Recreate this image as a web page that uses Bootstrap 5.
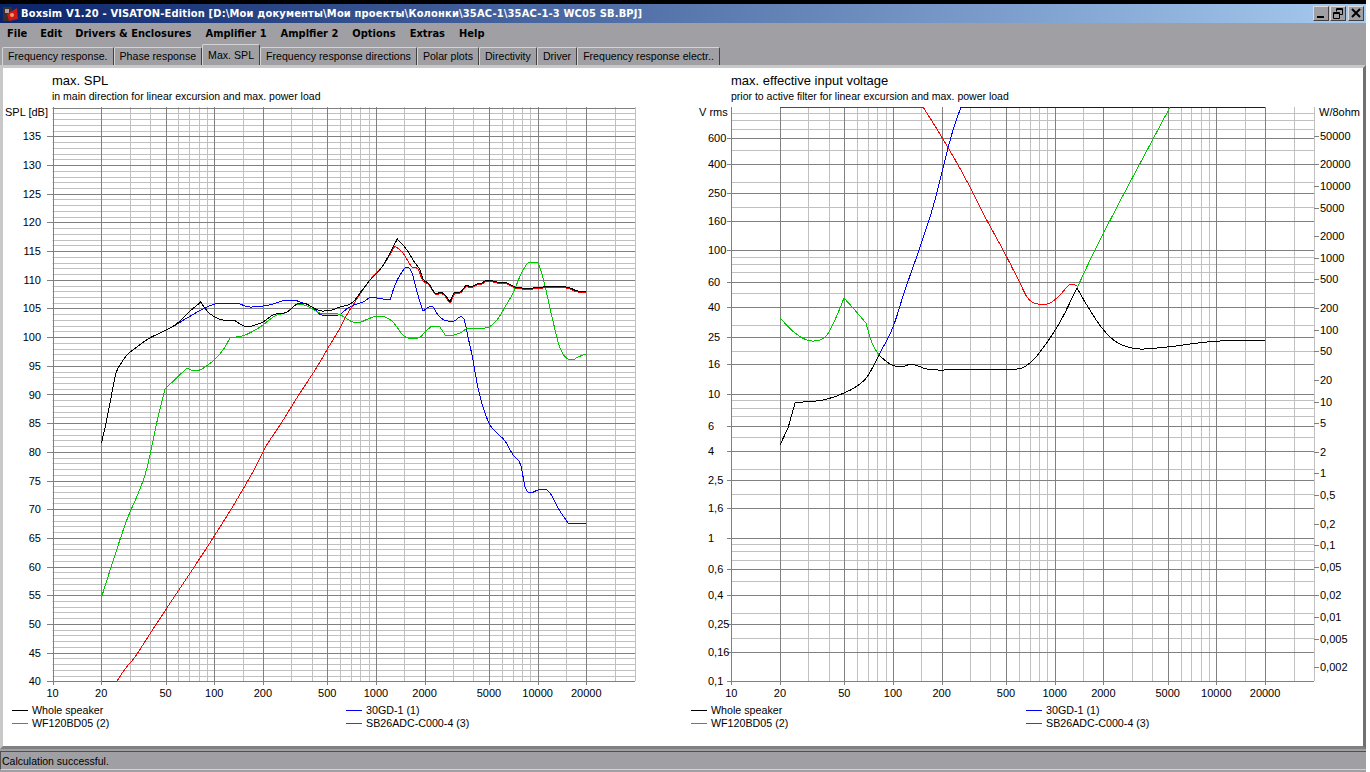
<!DOCTYPE html>
<html lang="en">
<head>
    <meta charset="UTF-8">
    <title>Boxsim V1.20</title>
    <link href="https://cdn.jsdelivr.net/npm/bootstrap@5.3.0/dist/css/bootstrap.min.css" rel="stylesheet">
    <style>
        body {
            background: #fff;
            overflow: hidden;
            font-family: "Liberation Sans", Arial, sans-serif;
            color: #000;
        }

        .app-window {
            width: 1366px;
            height: 772px;
            background: #a0a0a4;
            border-top: 4px solid #000;
        }

        .title-bar {
            height: 19px;
            padding: 0 2px 0 3px;
            background: linear-gradient(to right, #0a246a, #a6caf0);
        }

        .title-text {
            margin-left: 3px;
            color: #fff;
            font: bold 11px "DejaVu Sans Condensed", "Liberation Sans", sans-serif;
            letter-spacing: .17px;
            white-space: nowrap;
        }

        .win-btn {
            width: 16px;
            height: 15px;
            margin-left: 1px;
            background: #a0a0a4;
            border: 1px solid;
            border-color: #dcdcdc #404040 #404040 #dcdcdc;
        }

        .win-btn:last-child {
            margin-left: 2px;
        }

        .menu-bar {
            height: 21px;
            padding-left: 7px;
            font: bold 11px "DejaVu Sans Condensed", "Liberation Sans", sans-serif;
        }

        .menu-bar span {
            margin-right: 14px;
        }

        .menu-bar span:nth-child(-n+2) {
            margin-right: 13px;
        }

        .tab-row {
            height: 21px;
            padding-left: 2px;
            border: 0;
            flex-wrap: nowrap;
        }

        .tab-row .nav-link {
            height: 18px;
            margin-top: 3px;
            padding: 0 5px;
            color: #000;
            background: #a0a0a4;
            font-size: 10.6px;
            line-height: 16px;
            white-space: nowrap;
            border: 1px solid;
            border-color: #d4d4d4 #404040 #a0a0a4 #d4d4d4;
            border-bottom: 0;
            border-radius: 2px 2px 0 0;
        }

        .tab-row .nav-link.active {
            height: 21px;
            margin-top: 0;
            line-height: 20px;
            color: #000;
            background: #a0a0a4;
            border-color: #d4d4d4 #404040 #a0a0a4 #d4d4d4;
        }

        .chart-panel {
            height: 684px;
            background: #fff;
            border: 3px solid;
            border-color: #c8c8c8 #707070 #808080 #c8c8c8;
        }

        .chart-panel svg {
            display: block;
            font-family: "Liberation Sans", Arial, sans-serif;
            font-size: 11px;
        }

        .chart-panel polyline {
            shape-rendering: crispEdges;
        }

        .status-bar {
            height: 19px;
            margin-top: 2px;
            padding-left: 1px;
            font-size: 10.5px;
            line-height: 18px;
            border-top: 1px solid #505050;
            border-left: 1px solid #505050;
            border-bottom: 1px solid #d4d4d4;
        }
    </style>
</head>
<body>
    <div class="app-window d-flex flex-column">
        <div class="title-bar d-flex align-items-center">
            <svg width="15" height="16" viewBox="0 0 15 16">
                <rect x="0" y="1" width="9" height="14" fill="#3a3030"/>
                <rect x="2" y="3" width="4" height="4" fill="#b0a0a0"/>
                <polygon points="4,8 14,2 15,13 6,15" fill="#d01818"/>
                <circle cx="9" cy="9" r="2" fill="#f0a060"/>
            </svg>
            <div class="title-text flex-grow-1">Boxsim V1.20 - VISATON-Edition [D:\Мои документы\Мои проекты\Колонки\35AC-1\35AC-1-3 WC05 SB.BPJ]</div>
            <div class="d-flex">
                <div class="win-btn">
                    <svg class="d-block" width="14" height="13" viewBox="0 0 14 13"><rect x="3" y="9" width="7" height="2" fill="#000"/></svg>
                </div>
                <div class="win-btn">
                    <svg class="d-block" width="14" height="13" viewBox="0 0 14 13" fill="none" stroke="#000"><path d="M5.5 4.5V1.5H11.5V7.5H9M5 2.5H11"/><path d="M2.5 5.5H8.5V11.5H2.5ZM2 6.5H9"/></svg>
                </div>
                <div class="win-btn">
                    <svg class="d-block" width="14" height="13" viewBox="0 0 14 13" fill="none" stroke="#000" stroke-width="2"><path d="M3 2L11 10M11 2L3 10"/></svg>
                </div>
            </div>
        </div>

        <div class="menu-bar d-flex align-items-center">
            <span>File</span><span>Edit</span><span>Drivers &amp; Enclosures</span><span>Amplifier 1</span><span>Amplfier 2</span><span>Options</span><span>Extras</span><span>Help</span>
        </div>

        <ul class="nav tab-row">
            <li class="nav-item"><a class="nav-link" href="#">Frequency response.</a></li>
            <li class="nav-item"><a class="nav-link" href="#">Phase response</a></li>
            <li class="nav-item"><a class="nav-link active" href="#">Max. SPL</a></li>
            <li class="nav-item"><a class="nav-link" href="#">Frequency response directions</a></li>
            <li class="nav-item"><a class="nav-link" href="#">Polar plots</a></li>
            <li class="nav-item"><a class="nav-link" href="#">Directivity</a></li>
            <li class="nav-item"><a class="nav-link" href="#">Driver</a></li>
            <li class="nav-item"><a class="nav-link" href="#">Frequency response electr..</a></li>
        </ul>

        <div class="chart-panel d-flex">
            <svg id="chart-spl" width="660" height="678" viewBox="3 68 660 678"></svg>
            <svg id="chart-volt" width="700" height="678" viewBox="663 68 700 678"></svg>
        </div>

        <div class="status-bar">Calculation successful.</div>
    </div>

    <script>
        const DARK = '#808080', LIGHT = '#c0c0c0';
        const BLUE = '#0000ff', GREEN = '#00c800', RED = '#ff0000', BLACK = '#000000';
        const X_MAJOR = [10, 20, 50, 100, 200, 500, 1000, 2000, 5000, 10000, 20000];
        const X_MINOR = [30, 40, 60, 70, 80, 90, 150, 300, 400, 600, 700, 800, 900, 1500, 3000, 4000, 6000, 7000, 8000, 9000, 15000, 30000, 40000];

        // curves are pixel traces of the reference, in page coordinates; a third value 1 marks a sharp corner
        const splBlack = [[101.5,443,1],[106.7,420],[110,403],[113.3,385],[116,373],[120,365],[128,354],[137,347],[148,339],[160,333],[172,327],[180,321],[188,313],[200.7,302,1],[208,312],[215,317],[223,320],[233,320],[240,324],[248,327],[255,325],[263,322],[273,315],[287,312],[297,304],[303,303],[312,307],[322,311],[332,310],[340,307],[348,305],[353,302],[360,293],[370,280],[382,267],[397.3,239,1],[407,250],[415,263],[420,270],[423,279],[428,283],[437,294],[440,292],[445,295],[450,302,1],[455,292],[460,292],[467,285],[470,287],[477,284],[482,283],[487,280],[497,282],[507,283],[515,287],[522,288],[533,288],[543,287],[560,286],[570,288],[578,291],[586,291]];
        const splRedLow = [[101.5,681,1],[117,681,1],[125,669],[135,657],[146,640],[254,470],[265,448],[280,425],[300,393],[317,367],[328,348],[340,328],[345,318],[353,305],[370,280],[382,267],[395,246,1],[403,253],[412,267],[418,269],[423,281],[428,284]];
        const splRed = splRedLow.concat(splBlack.filter(p => p[0] > 428).map(p => [p[0], p[1] + 1]));
        const splBlue = splBlack.filter(p => p[0] < 172).concat([[172,327],[187,318],[203,309],[212,305],[220,303],[235,303],[250,307],[263,306],[273,304],[282,301],[292,300],[303,303],[312,307],[322,315],[338,315],[348,308],[357,304],[363,302],[372,297],[377,298],[390,300,1],[395,285],[402,272],[407,267],[412,273],[417,292],[423,311,1],[432,306],[438,315],[448,321],[454,321],[460,317],[464,319],[468,337],[473,360],[477,383],[483,407],[490,425],[498,434],[505,441],[513,455],[521,466],[525,487],[530,493],[538,490],[545,489],[550,493],[558,508],[568,523,1],[586,523,1]]);
        const splGreen = [[101.5,597,1],[125,525],[147,468],[151,450],[158,417],[165,389,1],[187,368,1],[195,371],[205,367],[223,350],[230,338,1],[245,335],[260,327],[275,316],[287,312],[298,304],[307,306],[320,313],[338,314],[357,323],[368,319],[377,316],[385,317],[393,322],[403,335],[408,338],[418,338],[427,330],[433,326],[438,326],[447,336],[462,332],[468,328],[485,328],[497,320],[505,307],[513,293],[523,270],[530,262],[537,262],[543,278],[552,317],[560,348],[572,360],[578,357],[586,354]];

        const voltBlack = [[780,445,1],[788,428,1],[795,403,1],[803,402],[823,400],[844,393],[857,386],[867,377],[879,355,1],[887,362],[895,366],[905,366],[910,364],[927,369],[942,370],[958,369],[1017,369],[1030,363],[1043,348],[1060,322],[1077,288,1],[1088,307],[1102,328],[1115,341],[1132,348],[1142,349],[1167,347],[1207,342],[1220,341],[1265,340]];
        const voltRed = [[780,107,1],[923,107,1],[943,139],[970,187],[983,213],[1003,250],[1020,283],[1027,297],[1038,304],[1047,304],[1058,297],[1072,284],[1077,286]];
        const voltBlue = [[879,355,1],[893,327],[905,290],[920,247],[933,207],[943,168],[953,130],[961,107,1],[1265,107,1]];
        const voltGreenA = [[780,318,1],[795,333],[812,341],[820,340],[827,335],[838,313],[844,298,1],[853,308],[866,323,1],[872,343],[879,355,1]];
        const voltGreenB = [[1077,288,1],[1095,250],[1170,107,1]];

        const legend = ['Whole speaker', 'WF120BD05 (2)', '30GD-1 (1)', 'SB26ADC-C000-4 (3)'];
        const legendColors = [BLACK, GREEN, BLUE, RED];

        function hLine(y, x1, x2, color) {
            return `<line x1="${x1}" x2="${x2}" y1="${Math.round(y) + .5}" y2="${Math.round(y) + .5}" stroke="${color}"/>`;
        }
        function vLine(x, y1, y2, color) {
            return `<line y1="${y1}" y2="${y2}" x1="${Math.round(x) + .5}" x2="${Math.round(x) + .5}" stroke="${color}"/>`;
        }
        function label(x, y, text, anchor, size) {
            const extra = size ? ` font-size="${size}"` : '';
            return `<text x="${x}" y="${y}" text-anchor="${anchor || 'start'}"${extra}>${text}</text>`;
        }

        // hermite smoothing between traced points, no overshoot at extremes
        function smooth(points) {
            const slope = (a, b) => (b[1] - a[1]) / (b[0] - a[0]);
            const tangent = i => {
                const p = points[i], prev = points[i - 1], next = points[i + 1];
                if (!prev || !next || p[2]) return null;
                const s1 = slope(prev, p), s2 = slope(p, next);
                return s1 * s2 <= 0 ? 0 : (s1 + s2) / 2;
            };
            const out = [];
            for (let i = 0; i < points.length - 1; i++) {
                const a = points[i], b = points[i + 1], dx = b[0] - a[0];
                const sec = slope(a, b);
                const m0 = tangent(i) === null ? sec : tangent(i);
                const m1 = tangent(i + 1) === null ? sec : tangent(i + 1);
                const steps = Math.max(1, Math.round(dx / 2));
                for (let s = 0; s < steps; s++) {
                    const t = s / steps, t2 = t * t, t3 = t2 * t;
                    const y = (2 * t3 - 3 * t2 + 1) * a[1] + (t3 - 2 * t2 + t) * dx * m0 + (3 * t2 - 2 * t3) * b[1] + (t3 - t2) * dx * m1;
                    out.push((a[0] + dx * t).toFixed(1) + ',' + y.toFixed(1));
                }
            }
            const last = points[points.length - 1];
            out.push(last[0] + ',' + last[1]);
            return out.join(' ');
        }
        function curve(points, color) {
            return `<polyline points="${smooth(points)}" fill="none" stroke="${color}"/>`;
        }

        // frequency axis shared by both charts
        function drawFreqAxis(left, top, bottom) {
            const fx = f => left + 161.7 * Math.log10(f / 10);
            let out = '';
            X_MINOR.forEach(f => { out += vLine(fx(f), top, bottom, LIGHT); });
            return { fx, out };
        }
        function drawFreqMajors(fx, top, bottom) {
            let out = '';
            X_MAJOR.forEach(f => {
                out += vLine(fx(f), top, bottom + 4, DARK);
                out += label(fx(f), bottom + 16, f, 'middle');
            });
            return out;
        }
        function drawLegend(x1, x2) {
            let out = '';
            legend.forEach((name, i) => {
                const x = i < 2 ? x1 : x2;
                const y = 710 + (i % 2) * 13;
                out += hLine(y, x, x + 16, legendColors[i]);
                out += label(x + 20, y + 4, name, 'start', 10.7);
            });
            return out;
        }

        function drawSpl() {
            const left = 52.5, top = 107, bottom = 681;
            const dbY = db => 681.3 - (db - 40) * 5.736;
            const axis = drawFreqAxis(left, top, bottom);
            let out = label(52, 85, 'max. SPL', 'start', 13) + label(52, 100, 'in main direction for linear excursion and max. power load', 'start', 10.5);
            out += label(5, 116, 'SPL [dB]');
            out += axis.out;
            for (let db = 41; db < 140; db++) {
                if (db % 5) out += hLine(dbY(db), left, 635, LIGHT);
            }
            for (let db = 40; db <= 140; db += 5) {
                out += hLine(dbY(db), db < 140 ? 47 : left, 635, DARK);
                if (db < 140) out += label(41, dbY(db) + 4, db, 'end');
            }
            out += drawFreqMajors(axis.fx, top, bottom);
            out += vLine(axis.fx(40000), top, bottom, LIGHT);
            out += curve(splBlue, BLUE) + curve(splGreen, GREEN) + curve(splRed, RED) + curve(splBlack, BLACK);
            out += drawLegend(12, 346);
            document.getElementById('chart-spl').innerHTML = out;
        }

        function drawVolt() {
            const left = 731.3, top = 107, bottom = 681;
            const vY = v => 537.5 - 143.7 * Math.log10(v);
            const powerY = p => 473.4 - 71.85 * Math.log10(p);
            const axis = drawFreqAxis(left, top, bottom);
            let out = label(731, 85, 'max. effective input voltage', 'start', 13) + label(731, 100, 'prior to active filter for linear excursion and max. power load', 'start', 10.5);
            out += label(699, 116, 'V rms') + label(1319, 116, 'W/8ohm');
            out += axis.out;
            [100, 10, 1, .1].forEach(d => {
                [9, 8, 7, 5, 3, 2].forEach(m => { out += hLine(vY(d * m), left, 1314, LIGHT); });
            });
            const ticks = ['600', '400', '250', '160', '100', '60', '40', '25', '16', '10', '6', '4', '2,5', '1,6', '1', '0,6', '0,4', '0,25', '0,16', '0,1'];
            ticks.forEach(t => {
                const y = vY(parseFloat(t.replace(',', '.')));
                out += hLine(y, 727, 1314, DARK);
                out += label(708, y + 4, t);
            });
            out += drawFreqMajors(axis.fx, top, bottom);
            out += vLine(axis.fx(40000), top, bottom, LIGHT);
            ['50000', '20000', '10000', '5000', '2000', '1000', '500', '200', '100', '50', '20', '10', '5', '2', '1', '0,5', '0,2', '0,1', '0,05', '0,02', '0,01', '0,005', '0,002'].forEach(t => {
                const y = powerY(parseFloat(t.replace(',', '.')));
                out += hLine(y, 1314, 1319, DARK);
                out += label(1320, y + 4, t);
            });
            out += curve(voltBlue, BLUE) + curve(voltGreenA, GREEN) + curve(voltGreenB, GREEN) + curve(voltRed, RED) + curve(voltBlack, BLACK);
            out += drawLegend(691, 1026);
            document.getElementById('chart-volt').innerHTML = out;
        }

        drawSpl();
        drawVolt();
    </script>
    <script src="https://cdn.jsdelivr.net/npm/bootstrap@5.3.0/dist/js/bootstrap.bundle.min.js"></script>
</body>
</html>
